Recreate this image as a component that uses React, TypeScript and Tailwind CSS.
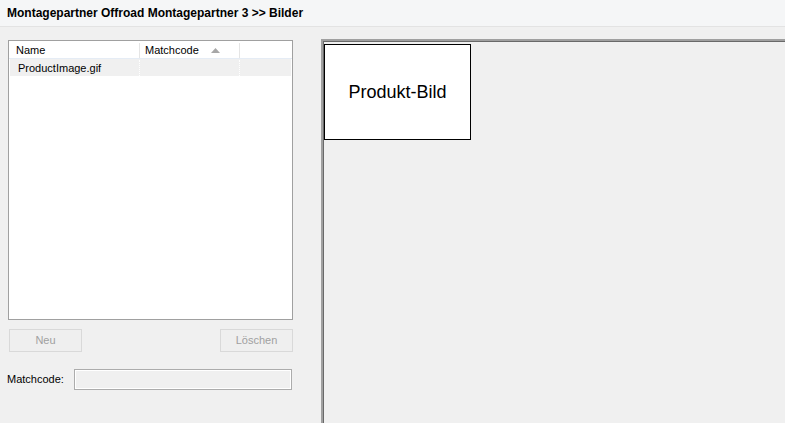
export default function App() {
  const ui = { fontFamily: '"Liberation Sans", Arial, sans-serif' };

  return (
    <div className="w-[785px] h-[423px] overflow-hidden bg-[#f0f0f0] flex flex-col" style={ui}>
      {/* Title bar */}
      <div className="h-[27px] shrink-0 bg-[#f5f6f7] border-b border-[#e3e3e3] flex items-center pl-[7px]">
        <span className="text-[12px] font-bold text-black">
          Montagepartner Offroad Montagepartner 3 &gt;&gt; Bilder
        </span>
      </div>

      <div className="flex flex-1 min-h-0">
        {/* Left panel */}
        <div className="w-[321px] shrink-0 pl-[8px] pt-[13px] flex flex-col">
          <div className="w-[285px] h-[280px] border border-[#a0a0a0] bg-white flex flex-col">
            <div className="h-[18px] pt-[2px] flex text-[11px] text-black border-b border-[#e5ecf5]">
              <div className="w-[131px] pl-[7px] flex items-center border-r border-[#e5e5e5]">Name</div>
              <div className="w-[100px] pl-[5px] flex items-center border-r border-[#e5e5e5]">
                Matchcode
                <svg width="9" height="5" viewBox="0 0 9 5" className="ml-[12px]">
                  <polygon points="0,5 4.5,0 9,5" fill="#a7a7a7" />
                </svg>
              </div>
              <div className="flex-1" />
            </div>
            <div className="h-[17px] pt-[1px] ml-[1px] mr-[1px] flex text-[11px] text-black bg-[#f0f0f0]">
              <div className="w-[130px] pl-[8px] flex items-center border-r border-dotted border-white">
                ProductImage.gif
              </div>
              <div className="w-[100px] border-r border-dotted border-white" />
              <div className="flex-1" />
            </div>
          </div>

          <div className="w-[285px] mt-[9px] flex justify-between pl-[1px]">
            <button className="w-[73px] h-[23px] border border-[#d9d9d9] bg-[#efefef] text-[11px] text-[#a0a0a0]">
              Neu
            </button>
            <button className="w-[73px] h-[23px] border border-[#d9d9d9] bg-[#efefef] text-[11px] text-[#a0a0a0]">
              Löschen
            </button>
          </div>

          <div className="mt-[17px] flex items-center">
            <span className="text-[11px] text-black w-[67px] -ml-[1px]">Matchcode:</span>
            <div className="w-[218px] h-[21px] border border-[#acacac] bg-[#f0f0f0] shadow-[inset_1px_1px_0_#ffffff,inset_-1px_-1px_0_#ffffff]" />
          </div>
        </div>

        {/* Right panel */}
        <div className="flex-1 mt-[12px] border-t-2 border-l-2 border-t-[#a0a0a0] border-l-[#a0a0a0] shadow-[inset_1px_1px_0_#696969] pl-[1px] pt-[3px]">
          <div className="w-[147px] h-[96px] bg-white border border-black flex items-center justify-center">
            <span className="text-[18px] text-black">Produkt-Bild</span>
          </div>
        </div>
      </div>
    </div>
  );
}
